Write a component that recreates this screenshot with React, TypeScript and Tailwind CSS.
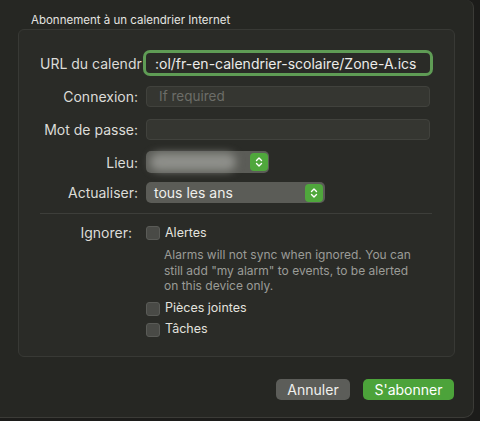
import React from "react";

const font = { fontFamily: "Inter, 'Noto Sans', sans-serif" };

function Stepper() {
  return (
    <div className="flex h-[18px] w-[18px] items-center justify-center rounded-[4px] bg-[#4fa73c]">
      <svg width="10" height="12" viewBox="0 0 10 12" fill="none">
        <path d="M2.5 4.5 L5 2 L7.5 4.5" stroke="white" strokeWidth="1.4" strokeLinecap="round" strokeLinejoin="round" />
        <path d="M2.5 7.5 L5 10 L7.5 7.5" stroke="white" strokeWidth="1.4" strokeLinecap="round" strokeLinejoin="round" />
      </svg>
    </div>
  );
}

function Checkbox({ label }: { label: string }) {
  return (
    <div className="flex h-[20px] items-center gap-[5px]">
      <div className="h-[14px] w-[14px] rounded-[3px] border border-[#5a5b57] bg-[#494a46]" />
      <span className="text-[12.5px] text-[#e2e2de]">{label}</span>
    </div>
  );
}

function Label({ children }: { children: React.ReactNode }) {
  return (
    <div className="w-[121px] shrink-0 whitespace-nowrap pr-[2px] text-right text-[14px] text-[#dcdcd8]">
      {children}
    </div>
  );
}

export default function App() {
  return (
    <div className="h-[421px] w-[480px] overflow-hidden bg-[#1c1c1a]" style={font}>
      <div className="h-[418px] w-[474px] rounded-tr-[8px] rounded-br-[10px] border-r border-b border-[#3b3b37] bg-[#262723] pt-[12px]">
        <div className="pl-[31px] text-[11.5px] leading-[16px] text-[#e4e4e0]">
          Abonnement à un calendrier Internet
        </div>

        {/* Groupe */}
        <div className="ml-[18px] mt-[1px] h-[328px] w-[437px] rounded-[6px] border border-[#383935] bg-[#2a2b27] pt-[20px]">
          {/* URL */}
          <div className="flex h-[26px] items-center">
            <div className="w-[121px] shrink-0 whitespace-nowrap pl-[21px] text-left text-[14px] text-[#dcdcd8]">
              URL du calendr
            </div>
            <div className="ml-[3px] flex h-[26px] w-[290px] items-center overflow-hidden rounded-[7px] border-[3px] border-[#5f9c55] bg-[#2a2b27] pl-[9px]">
              <span className="whitespace-nowrap text-[14px] text-[#ececea]">
                :ol/fr-en-calendrier-scolaire/Zone-A.ics
              </span>
            </div>
          </div>

          {/* Connexion */}
          <div className="mt-[10px] flex h-[21px] items-center">
            <Label>Connexion:</Label>
            <div className="ml-[6px] flex h-[21px] w-[284px] items-center rounded-[4px] border border-[#41423d] bg-[#353631] pl-[12px] text-[13.5px] text-[#6c6d68]">
              If required
            </div>
          </div>

          {/* Mot de passe */}
          <div className="mt-[12px] flex h-[21px] items-center">
            <Label>Mot de passe:</Label>
            <div className="ml-[6px] h-[21px] w-[284px] rounded-[4px] border border-[#41423d] bg-[#353631]" />
          </div>

          {/* Lieu */}
          <div className="mt-[11px] flex h-[22px] items-center">
            <Label>Lieu:</Label>
            <div className="ml-[6px] flex h-[22px] w-[123px] items-center justify-between rounded-[5px] bg-[#5b5c57] pl-[4px] pr-[1px]">
              <div className="h-[18px] w-[86px] rounded-full bg-[#8e8f8a] blur-[4px]" />
              <Stepper />
            </div>
          </div>

          {/* Actualiser */}
          <div className="mt-[9px] flex h-[21px] items-center">
            <Label>Actualiser:</Label>
            <div className="ml-[6px] flex h-[21px] w-[179px] items-center justify-between rounded-[5px] bg-[#5b5c57] pl-[8px] pr-[2px]">
              <span className="text-[14px] text-[#efefec]">tous les ans</span>
              <Stepper />
            </div>
          </div>

          <div className="ml-[21px] mt-[10px] h-px w-[392px] bg-[#3d3e3a]" />

          {/* Ignorer */}
          <div className="mt-[9px] flex">
            <div className="w-[121px] shrink-0 pr-[8px] text-right text-[14px] leading-[20px] text-[#dcdcd8]">
              Ignorer:
            </div>
            <div className="ml-[6px] flex flex-col">
              <Checkbox label="Alertes" />
              <div className="mt-[4px] pl-[18px] text-[12px] leading-[15.5px] text-[#9b9c97]">
                Alarms will not sync when ignored. You can
                <br />
                still add "my alarm" to events, to be alerted
                <br />
                on this device only.
              </div>
              <div className="mt-[5px]">
                <Checkbox label="Pièces jointes" />
              </div>
              <div className="mt-[1px]">
                <Checkbox label="Tâches" />
              </div>
            </div>
          </div>
        </div>

        {/* Boutons */}
        <div className="mt-[22px] flex justify-end gap-[13px] pr-[19px]">
          <button className="h-[21px] w-[74px] rounded-[5px] bg-[#5c5d59] text-[14px] text-[#f0f0ed]">
            Annuler
          </button>
          <button className="h-[21px] w-[91px] rounded-[5px] bg-[#4ca33a] text-[14px] text-white">
            S'abonner
          </button>
        </div>
      </div>
    </div>
  );
}
